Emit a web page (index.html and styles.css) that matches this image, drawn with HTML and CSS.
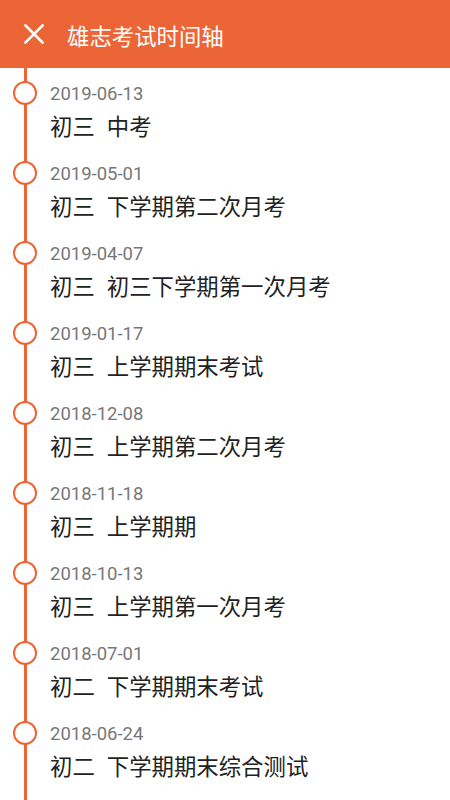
FILE: index.html
```html
<!DOCTYPE html>
<html lang="zh-CN">
<head>
    <meta charset="UTF-8">
    <meta name="viewport" content="width=device-width, initial-scale=1.0">
    <title>雄志考试时间轴</title>
    <link rel="stylesheet" href="styles.css">
</head>
<body>
    <header class="toolbar">
        <svg class="close-icon" width="24" height="24" viewBox="0 0 24 24">
            <path d="M3.5 3.5 L20.5 20.5 M20.5 3.5 L3.5 20.5" stroke="#fff" stroke-width="2.6" stroke-linecap="square" fill="none"/>
        </svg>
        <span class="toolbar-title">雄志考试时间轴</span>
    </header>

    <!-- 考试列表 -->
    <div class="timeline">
        <div class="exam">
            <div class="dot-col"><span class="dot"></span></div>
            <div class="exam-info">
                <div class="exam-date">2019-06-13</div>
                <div class="exam-name"><span class="grade">初三</span>中考</div>
            </div>
        </div>
        <div class="exam">
            <div class="dot-col"><span class="dot"></span></div>
            <div class="exam-info">
                <div class="exam-date">2019-05-01</div>
                <div class="exam-name"><span class="grade">初三</span>下学期第二次月考</div>
            </div>
        </div>
        <div class="exam">
            <div class="dot-col"><span class="dot"></span></div>
            <div class="exam-info">
                <div class="exam-date">2019-04-07</div>
                <div class="exam-name"><span class="grade">初三</span>初三下学期第一次月考</div>
            </div>
        </div>
        <div class="exam">
            <div class="dot-col"><span class="dot"></span></div>
            <div class="exam-info">
                <div class="exam-date">2019-01-17</div>
                <div class="exam-name"><span class="grade">初三</span>上学期期末考试</div>
            </div>
        </div>
        <div class="exam">
            <div class="dot-col"><span class="dot"></span></div>
            <div class="exam-info">
                <div class="exam-date">2018-12-08</div>
                <div class="exam-name"><span class="grade">初三</span>上学期第二次月考</div>
            </div>
        </div>
        <div class="exam">
            <div class="dot-col"><span class="dot"></span></div>
            <div class="exam-info">
                <div class="exam-date">2018-11-18</div>
                <div class="exam-name"><span class="grade">初三</span>上学期期</div>
            </div>
        </div>
        <div class="exam">
            <div class="dot-col"><span class="dot"></span></div>
            <div class="exam-info">
                <div class="exam-date">2018-10-13</div>
                <div class="exam-name"><span class="grade">初三</span>上学期第一次月考</div>
            </div>
        </div>
        <div class="exam">
            <div class="dot-col"><span class="dot"></span></div>
            <div class="exam-info">
                <div class="exam-date">2018-07-01</div>
                <div class="exam-name"><span class="grade">初二</span>下学期期末考试</div>
            </div>
        </div>
        <div class="exam">
            <div class="dot-col"><span class="dot"></span></div>
            <div class="exam-info">
                <div class="exam-date">2018-06-24</div>
                <div class="exam-name"><span class="grade">初二</span>下学期期末综合测试</div>
            </div>
        </div>
    </div>
</body>
</html>
```

FILE: styles.css
```css
body {
    margin: 0;
    background: #fff;
    font-family: Roboto, "Noto Sans CJK SC", sans-serif;
    overflow: hidden;
}

.toolbar {
    height: 68px;
    background: #ec6536;
    display: flex;
    align-items: center;
    padding-left: 22px;
    gap: 21px;
}
.close-icon {
    display: block;
}
.toolbar-title {
    color: #fff;
    font-family: "Noto Sans CJK SC", sans-serif;
    font-size: 22.4px;
    line-height: 30px;
    margin-top: 1px;
}

/* 時間軸の縦線 */
.timeline {
    min-height: calc(100vh - 68px);
    background: linear-gradient(#ec6536, #ec6536) 23.5px 0 / 3px 100% no-repeat;
}
.exam {
    height: 80px;
    display: flex;
}
.dot-col {
    width: 50px;
    flex-shrink: 0;
}
.dot {
    display: block;
    width: 24px;
    height: 24px;
    margin: 13px 0 0 13px;
    border: 2.5px solid #ec6536;
    border-radius: 50%;
    background: #fff;
    box-sizing: border-box;
}
.exam-info {
    padding-top: 14px;
}
.exam-date {
    font-family: Roboto, sans-serif;
    font-size: 18.5px;
    line-height: 24px;
    color: #777;
}
.exam-name {
    margin-top: 4px;
    font-family: "Noto Sans CJK SC", sans-serif;
    font-size: 22.4px;
    line-height: 30px;
    color: #222;
}
.grade {
    margin-right: 12px;
}
```
